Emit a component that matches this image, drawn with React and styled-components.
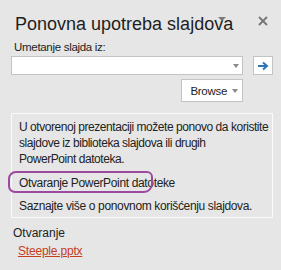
import React from "react";
import styled, { createGlobalStyle } from "styled-components";

const Global = createGlobalStyle`
  html, body { margin: 0; padding: 0; background: #e6e6e6; }
  body { font-family: "Liberation Sans", Arial, sans-serif; color: #222; }
`;

const Pane = styled.div`
  width: 281px;
  height: 270px;
  box-sizing: border-box;
  padding: 12px 8px 0 11px;
  position: relative;
  display: flex;
  flex-direction: column;
`;

const Header = styled.div`
  display: flex;
  align-items: flex-start;
  justify-content: space-between;
  position: relative;
`;

const Title = styled.h1`
  margin: 0 0 0 4px;
  font-size: 18px;
  font-weight: normal;
  line-height: 24px;
  color: #1e1e1e;
  letter-spacing: 0px;
`;

const MenuCaret = styled.span`
  position: absolute;
  left: 207px;
  top: 5px;
  width: 0;
  height: 0;
  border-left: 4px solid transparent;
  border-right: 4px solid transparent;
  border-top: 4px solid #7a7a7a;
`;

const Close = styled.button`
  border: 0;
  background: none;
  padding: 0;
  margin: 3px 4px 0 0;
  width: 12px;
  height: 12px;
  display: flex;
  align-items: center;
  justify-content: center;
`;

const Label = styled.div`
  font-size: 11.5px;
  line-height: 14px;
  margin: 4px 0 2px 3px;
  color: #222;
  letter-spacing: -0.3px;
`;

const SourceRow = styled.div`
  display: flex;
  align-items: center;
  gap: 10px;
`;

const Combo = styled.div`
  width: 232px;
  height: 19px;
  box-sizing: border-box;
  background: #fff;
  border: 1px solid #c3c3c3;
  display: flex;
  align-items: center;
  justify-content: flex-end;
  padding-right: 3px;
`;

const Caret = styled.span`
  width: 0;
  height: 0;
  border-left: 3.5px solid transparent;
  border-right: 3.5px solid transparent;
  border-top: 4px solid ${(p) => p.$color || "#8a8a8a"};
  margin-left: ${(p) => p.$gap || 0}px;
`;

const IconButton = styled.button`
  width: 20px;
  height: 19px;
  box-sizing: border-box;
  background: #fff;
  border: 1px solid #c3c3c3;
  padding: 0;
  display: flex;
  align-items: center;
  justify-content: center;
`;

const BrowseRow = styled.div`
  display: flex;
  justify-content: flex-end;
  padding-right: 30px;
  margin-top: 4px;
`;

const BrowseButton = styled.button`
  width: 62px;
  height: 23px;
  box-sizing: border-box;
  background: #fff;
  border: 1px solid #c3c3c3;
  font-family: "Liberation Sans", Arial, sans-serif;
  font-size: 11.5px;
  letter-spacing: -0.3px;
  color: #222;
  display: flex;
  align-items: center;
  justify-content: flex-end;
  padding: 0 4px 0 0;
`;

const InfoBox = styled.div`
  margin-top: 11px;
  width: 262px;
  box-sizing: border-box;
  border: 1px solid #fafafa;
  padding: 5px 2px 3px 7px;
  font-size: 12px;
  line-height: 16px;
  color: #222;
  position: relative;
`;

const Para = styled.p`
  margin: 0;
  letter-spacing: -0.45px;
  white-space: nowrap;
`;

const LinkLine = styled.div`
  margin-top: ${(p) => p.$top}px;
  letter-spacing: -0.35px;
`;

const Highlight = styled.span`
  position: absolute;
  left: -4px;
  top: 57px;
  width: 145px;
  height: 22px;
  box-sizing: border-box;
  border: 2.5px solid #9c4aa0;
  border-radius: 8px 6px 9px 7px;
`;

const Section = styled.div`
  margin: 7px 0 0 2px;
  font-size: 12px;
  line-height: 16px;
  color: #222;
`;

const FileLink = styled.a`
  display: inline-block;
  margin: 3px 0 0 7px;
  font-size: 12px;
  line-height: 14px;
  color: #c4401d;
  text-decoration: underline;
  letter-spacing: -0.2px;
`;

export default function App() {
  return (
    <>
      <Global />
      <Pane>
        <Header>
          <Title>Ponovna upotreba slajdova</Title>
          <MenuCaret />
          <Close aria-label="Zatvori">
            <svg width="10" height="10" viewBox="0 0 10 10">
              <path d="M1 1 L9 9 M9 1 L1 9" stroke="#767676" strokeWidth="1.8" />
            </svg>
          </Close>
        </Header>
        <Label>Umetanje slajda iz:</Label>
        <SourceRow>
          <Combo>
            <Caret />
          </Combo>
          <IconButton aria-label="Idi">
            <svg width="12" height="10" viewBox="0 0 12 10">
              <path d="M1 5 H10 M6 1.5 L10 5 L6 8.5" stroke="#2e75b6" strokeWidth="2" fill="none" />
            </svg>
          </IconButton>
        </SourceRow>
        <BrowseRow>
          <BrowseButton>
            Browse
            <Caret $gap={5} />
          </BrowseButton>
        </BrowseRow>
        <InfoBox>
          <Para>
            U otvorenoj prezentaciji možete ponovo da koristite
            <br />
            slajdove iz biblioteka slajdova ili drugih
            <br />
            PowerPoint datoteka.
          </Para>
          <LinkLine $top={8}>Otvaranje PowerPoint datoteke</LinkLine>
          <LinkLine $top={7}>Saznajte više o ponovnom korišćenju slajdova.</LinkLine>
          <Highlight />
        </InfoBox>
        <Section>Otvaranje</Section>
        <div>
          <FileLink href="#">Steeple.pptx</FileLink>
        </div>
      </Pane>
    </>
  );
}
